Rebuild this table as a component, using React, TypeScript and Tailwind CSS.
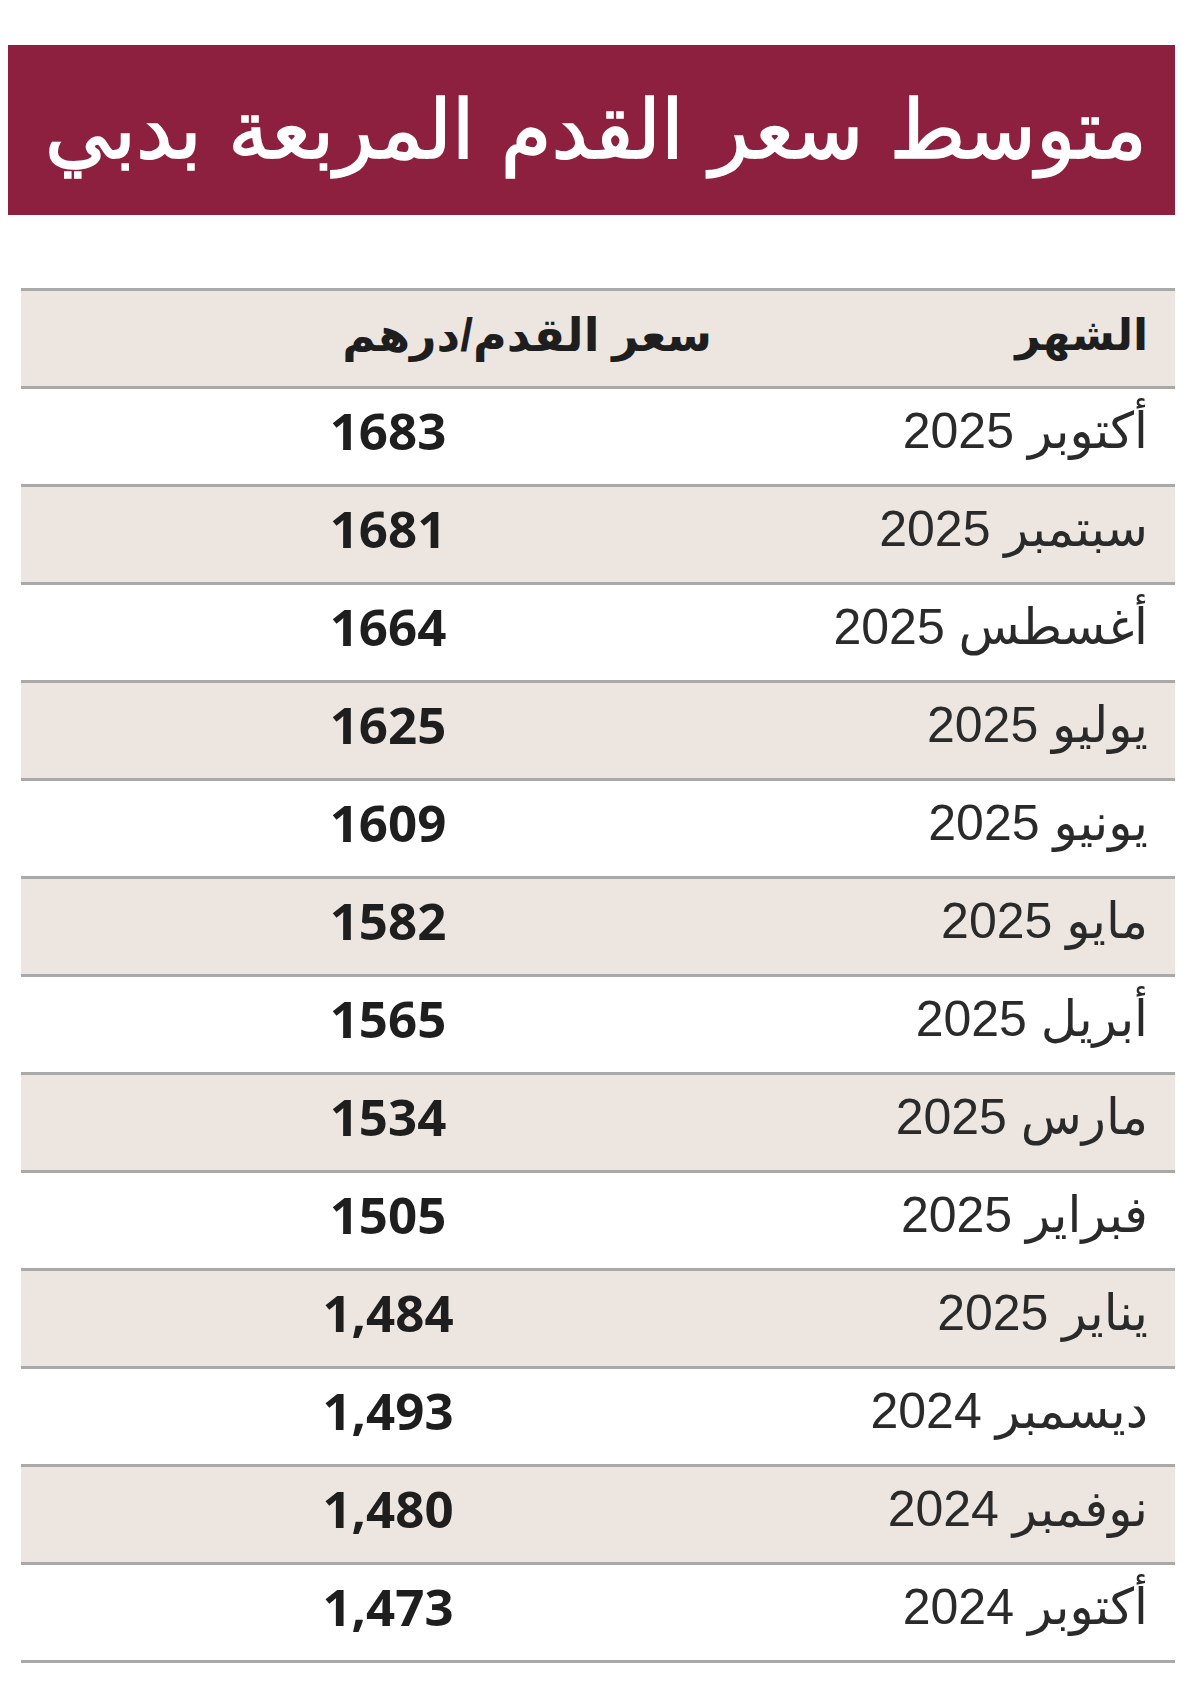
type Row = { month: string; price: string };

const rows: Row[] = [
  { month: "أكتوبر 2025", price: "1683" },
  { month: "سبتمبر 2025", price: "1681" },
  { month: "أغسطس 2025", price: "1664" },
  { month: "يوليو 2025", price: "1625" },
  { month: "يونيو 2025", price: "1609" },
  { month: "مايو 2025", price: "1582" },
  { month: "أبريل 2025", price: "1565" },
  { month: "مارس 2025", price: "1534" },
  { month: "فبراير 2025", price: "1505" },
  { month: "يناير 2025", price: "1,484" },
  { month: "ديسمبر 2024", price: "1,493" },
  { month: "نوفمبر 2024", price: "1,480" },
  { month: "أكتوبر 2024", price: "1,473" },
];

const arabic = "font-['Liberation_Sans','DejaVu_Sans',sans-serif]";

export default function App() {
  return (
    <div className="w-[1200px] h-[1706px] bg-white pt-[45px]">
      {/* title banner */}
      <div
        dir="rtl"
        className="ml-[8px] w-[1167px] h-[170px] bg-[#8d1f3f] flex items-center pr-[28px] overflow-hidden"
      >
        <h1 className="text-white text-[82px] leading-none whitespace-nowrap font-['DejaVu_Sans',sans-serif] font-normal [-webkit-text-stroke:1.5px_white]">
          متوسط سعر القدم المربعة بدبي
        </h1>
      </div>

      {/* table */}
      <div className="mt-[73px] ml-[21px] w-[1154px] border-t-[3px] border-[#a9a9a9]">
        <div className="flex h-[98px] items-center pb-[8px] bg-[#ede6e0] border-b-[3px] border-[#a9a9a9]">
          <div
            dir="rtl"
            className={`w-[734px] pr-[43px] text-[46px] font-bold text-[#1e1e1e] leading-none ${arabic}`}
          >
            سعر القدم/درهم
          </div>
          <div
            dir="rtl"
            className={`flex-1 pr-[27px] text-[44px] font-bold text-[#1e1e1e] leading-none ${arabic}`}
          >
            الشهر
          </div>
        </div>

        {rows.map((r, i) => (
          <div
            key={r.month}
            className={`flex h-[98px] items-center pb-[12px] border-b-[3px] border-[#a9a9a9] ${
              i % 2 === 1 ? "bg-[#ede6e0]" : "bg-white"
            }`}
          >
            <div className="w-[734px] text-center text-[51px] font-bold text-[#1e1e1e] font-['Open_Sans',sans-serif] leading-none">
              {r.price}
            </div>
            <div
              dir="rtl"
              className={`flex-1 pr-[27px] text-[50px] text-[#2a2a2a] leading-none ${arabic}`}
            >
              {r.month}
            </div>
          </div>
        ))}
      </div>
    </div>
  );
}
